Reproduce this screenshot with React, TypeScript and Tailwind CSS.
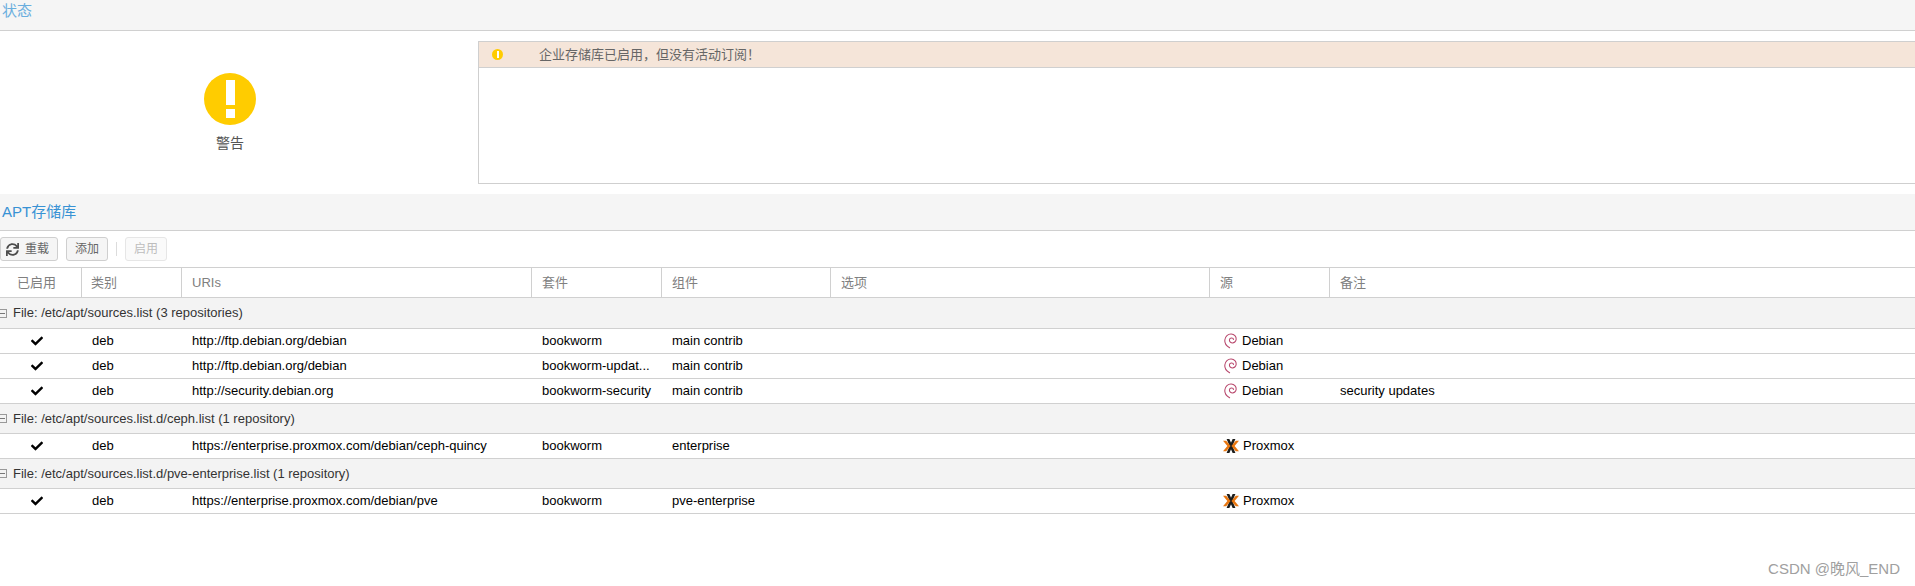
import { FaCheck, FaSync } from 'react-icons/fa';

const FONT = "font-['Liberation_Sans','Noto_Sans_CJK_SC',sans-serif]";

const COLUMNS = [
  { label: '已启用', className: 'w-[82px] pl-[17px]' },
  { label: '类别', className: 'w-[100px] pl-[9px]' },
  { label: 'URIs', className: 'w-[350px] pl-[10px]' },
  { label: '套件', className: 'w-[130px] pl-[10px]' },
  { label: '组件', className: 'w-[169px] pl-[10px]' },
  { label: '选项', className: 'w-[379px] pl-[10px]' },
  { label: '源', className: 'w-[120px] pl-[10px]' },
  { label: '备注', className: 'flex-1 pl-[10px]' },
];

type Origin = 'Debian' | 'Proxmox';

interface Repo {
  uri: string;
  suite: string;
  component: string;
  origin: Origin;
  comment?: string;
}

const GROUPS: { title: string; rows: Repo[]; height: string }[] = [
  {
    title: 'File: /etc/apt/sources.list (3 repositories)',
    height: 'h-[31px]',
    rows: [
      { uri: 'http://ftp.debian.org/debian', suite: 'bookworm', component: 'main contrib', origin: 'Debian' },
      { uri: 'http://ftp.debian.org/debian', suite: 'bookworm-updat...', component: 'main contrib', origin: 'Debian' },
      { uri: 'http://security.debian.org', suite: 'bookworm-security', component: 'main contrib', origin: 'Debian', comment: 'security updates' },
    ],
  },
  {
    title: 'File: /etc/apt/sources.list.d/ceph.list (1 repository)',
    height: 'h-[30px]',
    rows: [
      { uri: 'https://enterprise.proxmox.com/debian/ceph-quincy', suite: 'bookworm', component: 'enterprise', origin: 'Proxmox' },
    ],
  },
  {
    title: 'File: /etc/apt/sources.list.d/pve-enterprise.list (1 repository)',
    height: 'h-[30px]',
    rows: [
      { uri: 'https://enterprise.proxmox.com/debian/pve', suite: 'bookworm', component: 'pve-enterprise', origin: 'Proxmox' },
    ],
  },
];

function DebianLogo() {
  return (
    <svg viewBox="0 0 16 18" className="w-[15px] h-[16px] shrink-0" fill="none" stroke="#b8476c" strokeWidth="1.2" strokeLinecap="round">
      <path d="M7 16.5C3.5 14.5 1.2 11.5 1.6 7.8 2 3.8 5.2 1 8.8 1.2c3.4.2 5.8 2.8 5.6 5.8-.2 2.6-2.4 4.4-4.6 4.2-2-.2-3.2-1.8-3-3.4.2-1.4 1.4-2.4 2.8-2.2 1 .1 1.7.8 1.7 1.6" />
    </svg>
  );
}

function ProxmoxLogo() {
  return (
    <svg viewBox="0 0 16 14" className="w-[16px] h-[14px] shrink-0">
      <path d="M3.6 0h2.8L12.4 14H9.6z" fill="#1d1d1b" />
      <path d="M9.6 0h2.8L6.4 14H3.6z" fill="#1d1d1b" />
      <path d="M0 1.8h3.2L7.6 7l-4.4 5.2H0L4.4 7z" fill="#e8760f" />
      <path d="M16 1.8h-3.2L8.4 7l4.4 5.2H16L11.6 7z" fill="#e8760f" />
    </svg>
  );
}

function SectionHeader({ title, className }: { title: string; className: string }) {
  return (
    <div className={`flex items-center bg-[#f5f5f5] border-b border-[#d0d0d0] pl-[2px] text-[15px] ${className}`}>
      {title}
    </div>
  );
}

function ToolButton({ children, disabled }: { children: React.ReactNode; disabled?: boolean }) {
  return (
    <div
      className={`h-[24px] flex items-center justify-center rounded-[3px] border text-[12px] ${
        disabled
          ? 'border-[#e6e6e6] bg-[#fafafa] text-[#bdbdbd] w-[42px]'
          : 'border-[#cfcfcf] bg-[#f5f5f5] text-[#666666]'
      }`}
    >
      {children}
    </div>
  );
}

export default function App() {
  return (
    <div className={`relative w-[1915px] h-[586px] overflow-hidden bg-white text-[#000000] ${FONT}`}>
      <SectionHeader title="状态" className="h-[31px] pb-[7px] text-[#6aaede]" />

      <div className="flex h-[163px]">
        <div className="w-[478px] shrink-0 flex flex-col items-center pt-[42px] pr-[18px]">
          <div className="w-[52px] h-[52px] rounded-full bg-[#ffcc00] flex flex-col items-center justify-center gap-[4px]">
            <div className="w-[9px] h-[25px] bg-white" />
            <div className="w-[9px] h-[9px] bg-white" />
          </div>
          <div className="mt-[8px] text-[14px] text-[#555555]">警告</div>
        </div>
        <div className="flex-1 mt-[10px] h-[143px] border border-[#cfcfcf] border-r-0">
          <div className="h-[26px] flex items-center bg-[#f5e5d9] border-b border-[#d0d0d0] text-[13px] text-[#666666]">
            <div className="ml-[13px] w-[11px] h-[11px] rounded-full bg-[#ffcc00] flex items-center justify-center">
              <div className="w-[2px] h-[7px] bg-white" />
            </div>
            <span className="ml-[36px]">企业存储库已启用，但没有活动订阅！</span>
          </div>
        </div>
      </div>

      <SectionHeader title="APT存储库" className="h-[37px] text-[#3892d4]" />

      <div className="flex items-center h-[37px] border-b border-[#d0d0d0]">
        <ToolButton>
          <div className="flex items-center w-[56px] pl-[5px] gap-[6px]">
            <FaSync className="w-[13px] h-[13px] text-[#4d4d4d]" />
            <span>重载</span>
          </div>
        </ToolButton>
        <div className="ml-[8px] w-[42px]">
          <ToolButton>添加</ToolButton>
        </div>
        <div className="mx-[8px] w-px h-[14px] bg-[#dcdcdc]" />
        <ToolButton disabled>启用</ToolButton>
      </div>

      <div className="flex h-[30px] border-b border-[#d0d0d0] text-[13px] text-[#808080]">
        {COLUMNS.map((col, i) => (
          <div
            key={col.label}
            className={`flex items-center ${col.className} ${i < COLUMNS.length - 1 ? 'border-r border-[#d0d0d0]' : ''}`}
          >
            {col.label}
          </div>
        ))}
      </div>

      {GROUPS.map((group) => (
        <div key={group.title}>
          <div className={`flex items-center bg-[#f3f3f3] border-b border-[#d0d0d0] text-[13px] text-[#333333] ${group.height}`}>
            <div className="ml-[-2px] w-[9px] h-[9px] border border-[#999999] flex items-center justify-center">
              <div className="w-[5px] h-px bg-[#777777]" />
            </div>
            <span className="ml-[6px]">{group.title}</span>
          </div>
          {group.rows.map((row, i) => (
            <div key={i} className="flex h-[25px] items-center border-b border-[#d0d0d0] text-[13px]">
              <div className="w-[74px] flex justify-center">
                <FaCheck className="w-[12px] h-[12px]" />
              </div>
              <div className="w-[107px] pl-[18px]">deb</div>
              <div className="w-[350px] pl-[11px]">{row.uri}</div>
              <div className="w-[131px] pl-[11px] whitespace-nowrap">{row.suite}</div>
              <div className="w-[169px] pl-[10px]">{row.component}</div>
              <div className="w-[379px]" />
              <div className="w-[120px] pl-[13px] flex items-center gap-[4px]">
                {row.origin === 'Debian' ? <DebianLogo /> : <ProxmoxLogo />}
                <span>{row.origin}</span>
              </div>
              <div className="flex-1 pl-[10px]">{row.comment}</div>
            </div>
          ))}
        </div>
      ))}

      <div className="absolute right-[15px] top-[560px] text-[15px] leading-[18px] text-[#a0a0a0]">CSDN @晚风_END</div>
    </div>
  );
}
